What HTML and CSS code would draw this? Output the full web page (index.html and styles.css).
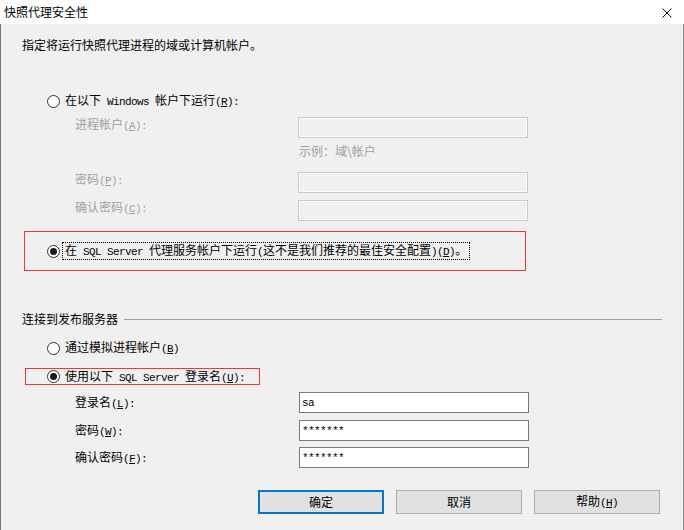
FILE: index.html
```html
<!DOCTYPE html>
<html lang="zh-CN">
<head>
<meta charset="utf-8">
<title>快照代理安全性</title>
<link rel="stylesheet" href="styles.css">
</head>
<body>
<div class="window">
  <header class="titlebar">
    <span class="title">快照代理安全性</span>
    <svg class="close" width="10" height="10" viewBox="0 0 10 10"><path d="M0.5 0.5L9.5 9.5M9.5 0.5L0.5 9.5" stroke="#111" stroke-width="1" fill="none"/></svg>
  </header>
  <main class="body">
    <p class="intro">指定将运行快照代理进程的域或计算机帐户。</p>

    <div class="radio-row row-win"><span class="radio"></span><span class="ss">在以下<span class="m"> Windows </span>帐户下运行<span class="m">(<u>R</u>):</span></span></div>

    <div class="field disabled row-a"><span class="lbl ss">进程帐户<span class="m">(<u>A</u>):</span></span><span class="input"></span></div>
    <div class="hint">示例：域\帐户</div>
    <div class="field disabled row-p"><span class="lbl ss">密码<span class="m">(<u>P</u>):</span></span><span class="input"></span></div>
    <div class="field disabled row-c"><span class="lbl ss">确认密码<span class="m">(<u>C</u>):</span></span><span class="input"></span></div>

    <div class="highlight box1">
      <span class="radio checked"></span>
      <span class="ss focus">在<span class="m"> SQL Server </span>代理服务帐户下运行<span class="m">(</span>这不是我们推荐的最佳安全配置<span class="m">)(<u>D</u>)</span>。</span>
    </div>

    <div class="group"><span class="group-title">连接到发布服务器</span><span class="group-line"></span></div>

    <div class="radio-row row-b"><span class="radio"></span><span class="ss">通过模拟进程帐户<span class="m">(<u>B</u>)</span></span></div>

    <div class="highlight box2">
      <span class="radio checked"></span>
      <span class="ss">使用以下<span class="m"> SQL Server </span>登录名<span class="m">(<u>U</u>):</span></span>
    </div>

    <div class="field enabled row-l"><span class="lbl ss">登录名<span class="m">(<u>L</u>):</span></span><span class="input"><span class="m">sa</span></span></div>
    <div class="field enabled row-w"><span class="lbl ss">密码<span class="m">(<u>W</u>):</span></span><span class="input"><span class="m">*******</span></span></div>
    <div class="field enabled row-f"><span class="lbl ss">确认密码<span class="m">(<u>F</u>):</span></span><span class="input"><span class="m">*******</span></span></div>

    <div class="buttons">
      <button class="btn default">确定</button>
      <button class="btn">取消</button>
      <button class="btn">帮助<span class="m">(<u>H</u>)</span></button>
    </div>
  </main>
</div>
</body>
</html>
```

FILE: styles.css
```css
* { box-sizing: border-box; }
html, body { margin: 0; padding: 0; }
body {
  width: 684px;
  height: 530px;
  overflow: hidden;
  background: #f0f0f0;
  font-family: "Noto Sans CJK SC", "Microsoft YaHei", sans-serif;
  font-size: 12px;
  color: #000;
}
.window {
  width: 684px;
  height: 530px;
  display: flex;
  flex-direction: column;
}
.titlebar {
  height: 24px;
  flex: none;
  background: #fff;
  display: flex;
  align-items: center;
  justify-content: space-between;
  padding: 0 12px 0 4px;
}
.title { line-height: 16px; }
.close { display: block; margin-top: 1px; }

.body {
  flex: 1;
  background: #f0f0f0;
  box-shadow: inset 1px 0 0 #6d7a72, inset -1px 0 0 #8a8a8a;
  padding-top: 11px;
}
.intro {
  margin: 0 0 0 22px;
  height: 20px;
  line-height: 20px;
}
.ss { line-height: 14px; white-space: nowrap; }
.m {
  font-family: "Liberation Mono", monospace;
  font-size: 11px;
  letter-spacing: -0.6px;
}
u { text-underline-offset: 1px; }

.radio-row {
  display: flex;
  align-items: center;
  gap: 5px;
  height: 20px;
  margin-left: 47px;
}
.row-win { margin-top: 36px; }
.row-b { margin-top: 11px; }

.radio {
  flex: none;
  position: relative;
  width: 13px;
  height: 13px;
  border: 1px solid #333;
  border-radius: 50%;
  background: #fff;
}
.radio.checked::after {
  content: "";
  position: absolute;
  left: 2px;
  top: 2px;
  width: 7px;
  height: 7px;
  border-radius: 50%;
  background: #1a1a1a;
}

.field {
  display: flex;
  height: 21px;
  margin-left: 75px;
}
.field .input {
  width: 230px;
  height: 21px;
  flex: none;
}
.field.disabled { color: #a0a0a0; }
.field.disabled .lbl { width: 223px; line-height: 13px; }
.field.disabled .input {
  border: 1px solid #c9c9c9;
  background: #f0f0f0;
  box-shadow: inset 0 0 0 1px #fbfbfb;
}
.field.enabled { align-items: center; }
.field.enabled .lbl { width: 224px; }
.field.enabled .input {
  border: 1px solid #7a7a7a;
  background: #fff;
  padding-left: 2px;
  display: flex;
  align-items: center;
}
.row-a { margin-top: 6px; }
.row-p { margin-top: 14px; }
.row-c { margin-top: 7px; }
.row-l { margin-top: 7px; }
.row-w { margin-top: 7px; }
.row-f { margin-top: 6px; }

.hint {
  margin: 6px 0 0 299px;
  height: 14px;
  line-height: 14px;
  color: #a0a0a0;
}

.highlight {
  display: flex;
  align-items: center;
  border: 1px solid #e8393d;
}
.box1 {
  margin: 10px 0 0 24px;
  width: 502px;
  height: 40px;
  padding-left: 22px;
  gap: 2px;
}
.focus {
  border: 1px dotted #000;
  padding: 0 2px;
}
.box2 {
  margin: 10px 0 0 25px;
  width: 235px;
  height: 17px;
  padding-left: 21px;
  gap: 5px;
}

.group {
  display: flex;
  align-items: center;
  gap: 6px;
  height: 16px;
  margin: 40px 22px 0 22px;
}
.group-title { line-height: 16px; white-space: nowrap; }
.group-line { flex: 1; height: 1px; background: #a0a0a0; }

.buttons {
  display: flex;
  gap: 12px;
  margin: 22px 0 0 258px;
}
.btn {
  width: 126px;
  height: 24px;
  margin: 0;
  padding: 0;
  font-family: inherit;
  font-size: 12px;
  color: #000;
  background: #e1e1e1;
  border: 1px solid #adadad;
  line-height: 20px;
}
.btn.default { border: 2px solid #0078d7; }
```
